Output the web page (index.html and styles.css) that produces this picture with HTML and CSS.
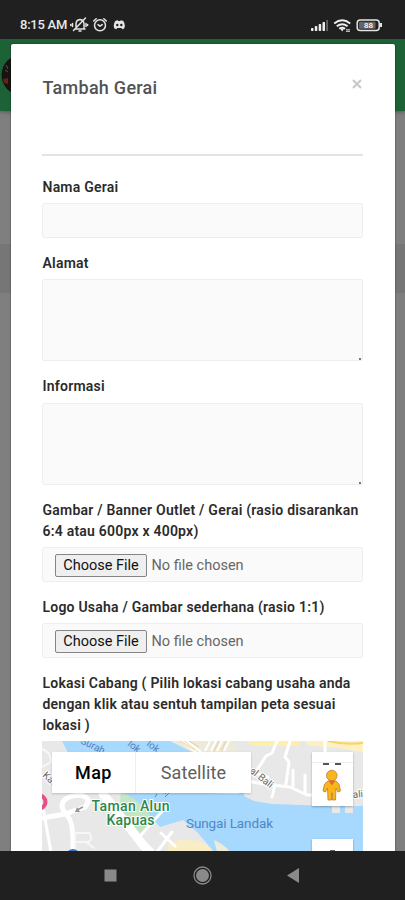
FILE: index.html
```html
<!DOCTYPE html>
<html lang="id">
<head>
<meta charset="utf-8">
<meta name="viewport" content="width=device-width, initial-scale=1">
<title>Tambah Gerai</title>
<link rel="stylesheet" href="styles.css">
</head>
<body>
<header class="status">
  <span class="clock">8:15 AM</span>
  <svg class="status-left" width="57" height="18" viewBox="0 0 57 18" fill="none" stroke="#e4e4e4" stroke-width="1.5" stroke-linecap="round" stroke-linejoin="round">
    <path d="M5 13h10M6 12V8q0-4 4-4.500Q14 4 14 8v4M9 15h2M2.500 7.500v3M.8 8.500v1M16 7.500v3M17.600 8.500v1M15.500 2 3.500 14.500"/>
    <circle cx="30" cy="9.300" r="5.500"/><path d="m23.700 5 2.500-2.300M36.300 5l-2.500-2.300M28 8.600l2 1.600 2.300-1.600"/>
    <path d="M44.400 12.500 43.700 10q0-3 1.600-5 1.400-.8 2.500-.8l.5.800h2l.5-.8q1.100 0 2.500.8 1.600 2 1.600 5l-.7 2.500-2 .8-.7-1.200h-4.400l-.7 1.200Z" fill="#e4e4e4" stroke="none"/>
    <circle cx="47.300" cy="9" r="1.200" fill="#202020" stroke="none"/><circle cx="51.300" cy="9" r="1.200" fill="#202020" stroke="none"/>
  </svg>
  <svg class="status-right" width="74" height="18" viewBox="0 0 74 18">
    <g fill="#eee"><rect x="1" y="12" width="2.500" height="3" rx=".7"/><rect x="4.800" y="10" width="2.500" height="5" rx=".7"/><rect x="8.700" y="8" width="2.500" height="7" rx=".7"/><rect x="12.500" y="6" width="2.500" height="9" rx=".7"/></g><rect x="16.200" y="4" width="1.800" height="11" fill="#666"/>
    <g fill="none" stroke="#eee" stroke-width="1.900"><path d="M24.200 7.500q8-6.500 16 0M26.800 10.300q5.400-4.300 10.800 0M29.300 12.800q2.900-2.300 5.800 0"/></g><path d="m30.500 13 1.700 2.500 1.500-2.500Z" fill="#eee"/><path d="M36 13.800h4M36 15.300h4" stroke="#ddd"/>
    <rect x="47.200" y="4" width="22" height="10.500" rx="3" fill="none" stroke="#e4e4e4" stroke-width="1.500"/><rect x="49" y="5.700" width="16.500" height="7" rx="1" fill="#656565"/><path d="M71 7v4" stroke="#e4e4e4" stroke-width="2"/><text class="battery" x="58.500" y="12" text-anchor="middle">88</text>
  </svg>
</header>
<main class="screen">
  <div class="backdrop"><div class="appbar"><svg width="36" height="44" viewBox="0 0 36 44"><circle cx="22" cy="22" r="20.500" fill="#151413"/><path d="M3 26l5-1v6l-4-1Z" fill="#6b2014"/><path d="m6 12 2 4m-3 1 3 2" stroke="#53594c"/></svg></div><div class="stripe"></div></div>
  <section class="modal">
    <div class="modal-head"><h1>Tambah Gerai</h1><button class="close" aria-label="Tutup"><svg width="10" height="10" viewBox="0 0 10 10"><path d="m1 1 8 8M9 1 1 9" stroke="#c9c9c9" stroke-width="2.200"/></svg></button></div>
    <form>
      <label for="nama">Nama Gerai</label><input class="field" id="nama">
      <label for="alamat">Alamat</label><div class="area"><textarea class="field" id="alamat"></textarea><i></i></div>
      <label for="info">Informasi</label><div class="area"><textarea class="field" id="info"></textarea><i></i></div>
      <label>Gambar / Banner Outlet / Gerai (rasio disarankan<br>6:4 atau 600px x 400px)</label>
      <div class="field file"><button type="button">Choose File</button><span>No file chosen</span></div>
      <label>Logo Usaha / Gambar sederhana (rasio 1:1)</label>
      <div class="field file"><button type="button">Choose File</button><span>No file chosen</span></div>
      <label>Lokasi Cabang ( Pilih lokasi cabang usaha anda<br>dengan klik atau sentuh tampilan peta sesuai<br>lokasi )</label>
      <div class="map">
        <svg width="321" height="111" viewBox="0 0 321 111">
          <rect width="321" height="111" fill="#e8e8e9"/>
          <path d="M20 0H132L155 12 163 52 196 53 202 48 202 55 212 60 230 63 262 64 280 65H321V111H172L156 92 141 79 118 86 109 76 85 55 45 28 30 20Z" fill="#a7d8fd"/>
          <path d="M128 0h193v65h-10v7h-8v-7h-9v-5l-5 5h-13l-4-4-12 3-32-4-8-8-4-3V12h-55Z" fill="#e8e8e9"/>
          <path d="M270 62h51v3h-10v7h-8v-7h-5v7h-8v-7h-20Z" fill="#e8e8e9"/>
          <path d="M128 0h65v11h-43Z" fill="#eeeadb"/>
          <path d="M202 0h58l-5 5h-42Z" fill="#ffefad"/><path d="M262 0h59v11l-25-4-30-3Z" fill="#fdf1c2"/><path d="M286 0q16 4 35 2" stroke="#f8d463" stroke-width="2" fill="none"/>
          <path d="M79 51q14 5 27 20l6 9-17 17-18-25Z" fill="#c3e6c5"/>
          <path d="m126 103 14-5 18 2 8 5 6 6h-46Z" fill="#f8edc5"/>
          <path d="M172 99q11 5 16 12h-13Z" fill="#f0ebd9"/>
          <g fill="none" stroke="#fff" stroke-linecap="round" stroke-linejoin="round">
            <g stroke-width="5"><path d="M23 72C16 62 22 55 38 54q13 3 5 12L23 73 0 77M23 73q9 4 8 37"/><path d="M61 53 101 104l7 7" stroke-width="9"/><path d="m99 94 24-27" stroke-width="3"/><path d="m1 67 8 44" stroke-width="3"/></g>
            <g stroke-width="3"><path d="m119 92 14 13M130 91l-15 20"/><path d="m235 0-5 12-6 3-11 17 13 4M248 0l-5 16 4 5-3 22M283 0v11M251 29v16M263 34v17M206 40l15 3 27 3 17 8h20M233 44l-3 12"/></g>
            <path d="M0 8q10 4 9 13L0 26M33 92h14q5 6-1 9H35M33 92v18M44 101l8 6" stroke="#f7f7f7" stroke-width="2"/>
          </g>
          <path d="M139 0l15 11M145 0l14 11M168 0l-5 10M174 0l-5 10M180 0l-5 10M187 0l-5 10" stroke="#fff" stroke-width="2"/>
          <path d="m138 0 15 9m-6-9 10 6M177 0l-5 10M184 0l-5 10" stroke="#e8d38d" fill="none"/>
          <path d="m113 56 2-3m8 0 3-3m-3 6 4-4m6 0 3-3" stroke="#568fa3"/>
          <path d="m41 66-6 3" stroke="#959595" stroke-width="1.500"/><path d="m33 71 2-5 3 5Z" fill="#959595"/>
          <circle cx="-3" cy="61" r="6.500" fill="none" stroke="#e84d87" stroke-width="4"/>
          <circle cx="31" cy="115" r="7" fill="#3c78c5"/>
          <g class="river"><text transform="translate(38 2) rotate(26)">Surah</text><text transform="translate(85 4) rotate(39)">lok</text><text transform="translate(104 4) rotate(37)">lok</text></g>
          <g class="road"><text transform="translate(0 35) rotate(43)">Kau</text><text transform="translate(207 31) rotate(38)">al Bali</text><text x="311" y="57" transform="rotate(-5 311 57)">ali</text></g>
          <g class="park"><text x="49.500" y="69.500" textLength="78">Taman Alun</text><text x="64.500" y="84" textLength="48">Kapuas</text></g>
          <text class="water" x="144" y="87" textLength="87">Sungai Landak</text>
        </svg>
        <div class="map-types"><button type="button" class="active">Map</button><button type="button">Satellite</button></div>
        <div class="pegman"><svg width="41" height="54" viewBox="0 0 41 54"><path d="M0 10.500h41" stroke="#eee"/><path d="M11 12h6m6 0h6" stroke="#555" stroke-width="2"/><path d="M16 29h8l3 3 1.500 7-2.500 1-2-4-.5 12H20.500v-7h-1v7H16l-.5-12-2 4-2.500-1 1.500-7Z" fill="#fbb51c" stroke="#b98032" stroke-width=".8"/><circle cx="19.800" cy="23.500" r="5.300" fill="#fbb51c" stroke="#b98032" stroke-width=".8"/><path d="m16.500 28.500 3.300 5 3.700-5Z" fill="#e46a22"/></svg></div>
        <div class="zoom"></div>
      </div>
    </form>
  </section>
</main>
<nav class="navbar"><svg width="405" height="49" viewBox="0 0 405 49"><rect x="104.500" y="18.500" width="12" height="12" fill="#898989"/><circle cx="202.500" cy="24.500" r="8.500" fill="none" stroke="#8a8a8a" stroke-width="1.300"/><circle cx="202.500" cy="24.500" r="6.500" fill="#8a8a8a"/><path d="m287 24.500 12-7.500v15Z" fill="#8a8a8a"/></svg></nav>
</body>
</html>
```
FILE: styles.css
```css
* { box-sizing: border-box; }
body { margin: 0; width: 405px; height: 900px; overflow: hidden; display: flex; flex-direction: column; font-family: Roboto, sans-serif; color: #2b2b2b; background: #202020; }
svg { display: block; flex: none; }
button { font-family: inherit; }

.status { height: 39px; flex: none; display: flex; align-items: flex-end; padding: 0 21px 5px 20px; background: #202020; }
.clock { color: #e9e9e9; font-size: 13px; font-weight: 500; line-height: 18px; width: 50px; white-space: nowrap; letter-spacing: -.25px; }
.status-right { margin-left: auto; }
.battery { font: 500 8px Roboto, sans-serif; fill: #fff; }

.screen { flex: none; height: 812px; position: relative; overflow: hidden; padding: 4.500px 10px 0 11px; }
.backdrop { position: absolute; inset: 0; background: #7f7f7f; }
.appbar { height: 72px; padding-top: 14px; background: #1d6237; box-shadow: 0 1px 4px #555; }
.stripe { margin-top: 133px; height: 49px; background: #767676; }

.modal { position: relative; height: 820px; padding: 0 32px 0 31px; background: #fff; border-radius: 2px; box-shadow: 0 0 2px rgba(0, 0, 0, .5); }
.modal-head { height: 112.500px; display: flex; justify-content: space-between; align-items: flex-start; padding-top: 32.500px; border-bottom: 2px solid #e4e4e4; }
h1 { margin: 0; padding-left: .5px; font-size: 18px; line-height: 24px; font-weight: 500; letter-spacing: .27px; color: #505357; }
.close { border: 0; padding: 3px 1px; background: none; }
form { padding-top: 20.700px; }
label { display: block; margin-bottom: 5.200px; padding-left: .5px; font-size: 14px; line-height: 20.900px; font-weight: 600; letter-spacing: .22px; white-space: nowrap; }
.field { display: block; width: 100%; height: 35px; margin: 0 0 15px; border: 1px solid #eee; border-radius: 2px; background: #fafafa; }
.area { position: relative; }
textarea.field { height: 82.600px; resize: none; }
.area i { position: absolute; right: 2px; bottom: 1px; width: 2px; height: 2px; background: #777; }
.file { display: flex; align-items: center; padding: 2px 12px 0; gap: 5px; font-size: 14.500px; color: #666; }
.file button { width: 92px; height: 23px; padding: 0; border: 1px solid #858585; border-radius: 2px; background: #efefef; color: #111; font-size: 14.500px; }
.file span { margin-left: -.5px; }

.map { position: relative; height: 112px; overflow: hidden; }
.map-types { position: absolute; left: 10px; top: 10.500px; width: 199px; height: 41px; display: flex; background: #fff; box-shadow: 0 1px 2px rgba(0, 0, 0, .2); }
.map-types button { flex: 1; border: 0; padding: 0; background: #fff; color: #606060; font-size: 18px; letter-spacing: .1px; }
.map-types .active { flex: 0 0 84px; border-right: 1px solid #eee; color: #000; font-weight: 500; letter-spacing: .4px; }
.pegman, .zoom { position: absolute; left: 270px; width: 41px; background: #fff; box-shadow: 0 1px 2px rgba(0, 0, 0, .3); }
.pegman { top: 10.500px; height: 54px; }
.zoom { top: 98px; height: 40px; }
.zoom::after { content: ""; position: absolute; left: 18px; top: 11px; width: 5px; height: 2px; background: #666; }
.river { font: 10px Roboto, sans-serif; fill: #527fbd; }
.road { font: 10px Roboto, sans-serif; fill: #666; stroke: #fff; stroke-width: 2px; paint-order: stroke; }
.park { font: 500 14px Roboto, sans-serif; fill: #2c8748; stroke: #fff; stroke-width: 2px; paint-order: stroke; }
.water { font: 13.500px Roboto, sans-serif; fill: #5087c9; }
.navbar { height: 49px; flex: none; background: #202020; }
```
